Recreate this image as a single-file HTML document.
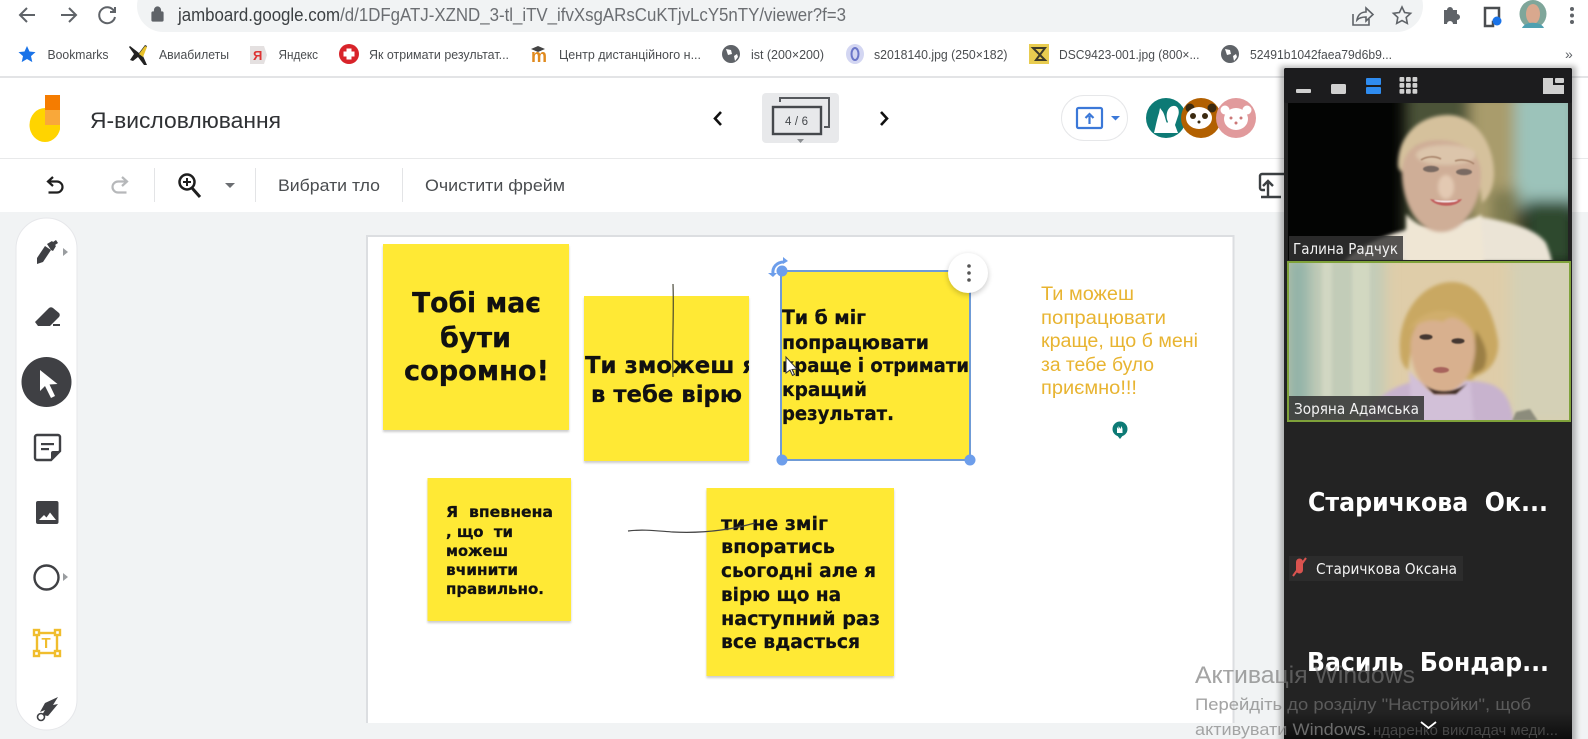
<!DOCTYPE html>
<html><head><meta charset="utf-8"><title>Jamboard</title>
<style>
html,body{margin:0;padding:0;background:#fff;width:1588px;height:739px;overflow:hidden}
svg{display:block}
text{font-family:"Liberation Sans","Noto Sans CJK SC",sans-serif}
.b{font-size:13px;fill:#4a4d50}
.s{font-family:"DejaVu Sans",sans-serif;font-weight:700;fill:#111;stroke:#111;stroke-width:.25}
.y{font-size:19px;fill:#e8b431}
.w{fill:#8a8a8a;opacity:.5}
.big{font-family:"DejaVu Sans",sans-serif;font-weight:700;font-size:26px;fill:#fff}
.lb{font-family:"DejaVu Sans",sans-serif;font-size:15px;fill:#f2f2f2}
</style></head><body>
<svg width="1588" height="739" viewBox="0 0 1588 739" xmlns="http://www.w3.org/2000/svg">
<defs>
<filter id="b05" x="-30%" y="-30%" width="160%" height="160%"><feGaussianBlur stdDeviation=".6"/></filter>
<filter id="b1" x="-30%" y="-30%" width="160%" height="160%"><feGaussianBlur stdDeviation="1"/></filter>
<filter id="b2" x="-30%" y="-30%" width="160%" height="160%"><feGaussianBlur stdDeviation="1.800"/></filter>
<filter id="b3" x="-40%" y="-40%" width="180%" height="180%"><feGaussianBlur stdDeviation="7"/></filter>
<filter id="sh" x="-30%" y="-30%" width="160%" height="160%"><feGaussianBlur stdDeviation="3"/></filter>
<clipPath id="c2"><rect x="584" y="296" width="165" height="165"/></clipPath>
<clipPath id="v1"><rect x="1288" y="103" width="280" height="157"/></clipPath>
<clipPath id="v2"><rect x="1287" y="261" width="283" height="160"/></clipPath>
<linearGradient id="bot" x1="0" y1="0" x2="0" y2="1"><stop offset="0" stop-color="#232323"/><stop offset="1" stop-color="#0d0d0d"/></linearGradient>
</defs>

<rect width="1588" height="739" fill="#fff"/>

<!-- browser top -->
<rect x="137" y="-20" width="1286" height="52" rx="26" fill="#f1f3f4"/>
<g fill="none" stroke="#5f6368" stroke-width="2">
<path d="M35 15H20M27 8l-7 7 7 7"/>
<path d="M61 15h15M69 8l7 7-7 7"/>
<path d="M114 11a8 8 0 1 0 1 6M115 7v5h-5"/>
</g>
<path d="M153 12h9a1 1 0 0 1 1 1v7a1 1 0 0 1-1 1h-9a1 1 0 0 1-1-1v-7a1 1 0 0 1 1-1zM154.500 12V10a3 3 0 0 1 6 0v2" fill="#5f6368" stroke="#5f6368" stroke-width="1.200"/>
<text x="178" y="21" font-size="18" fill="#3c4043" textLength="668" lengthAdjust="spacingAndGlyphs">jamboard.google.com<tspan fill="#6b6e72">/d/1DFgATJ-XZND_3-tl_iTV_ifvXsgARsCuKTjvLcY5nTY/viewer?f=3</tspan></text>
<g fill="none" stroke="#5f6368" stroke-width="1.600">
<path d="M1353 14v11h16v-6M1357 20c1-6 5-8 9-8V8l7 6.500-7 6.500v-4c-4 0-7 1-9 3z"/>
<path d="M1402 7l2.600 5.500 6 .8-4.400 4.100 1.100 6-5.300-2.900-5.300 2.900 1.100-6-4.400-4.100 6-.8z"/>
</g>
<path d="M1444 13h3a3 3 0 0 1 6 0h4v4a3 3 0 0 1 0 6v4h-4a3 3 0 0 0-6 0h-3z" fill="#5f6368" transform="translate(0,-3)"/>
<path d="M1485 8h14v14h-6v4h-8z" fill="none" stroke="#4a4d50" stroke-width="2.500"/>
<circle cx="1497" cy="21" r="4.500" fill="#1a73e8"/>
<ellipse cx="1533" cy="14" rx="13.500" ry="14" fill="#7fa69a"/>
<ellipse cx="1533" cy="14" rx="7" ry="10" fill="#d9a88e"/>
<path d="M1522 28c3-7 19-7 22 0z" fill="#4fa0b0"/>
<g fill="#5f6368"><circle cx="1572" cy="9" r="2"/><circle cx="1572" cy="15.500" r="2"/><circle cx="1572" cy="22" r="2"/></g>

<!-- bookmarks -->
<path d="M27 46l2.500 5.500 6 .6-4.500 4 1.300 6-5.300-3.100-5.300 3.100 1.300-6-4.500-4 6-.6z" fill="#1a73e8"/>
<text class="b" x="47.500" y="59" textLength="61" lengthAdjust="spacingAndGlyphs">Bookmarks</text>
<path d="M130 46l9 7 6-8 2 1-4 10 4 9-3 0-6-8-5 4-3-1 4-6-5-7z" fill="#222"/><path d="M139 54l6-8 2 1-4 10z" fill="#e9c22c"/>
<text class="b" x="159" y="59" textLength="70" lengthAdjust="spacingAndGlyphs">Авиабилеты</text>
<path d="M250 46h14l3 9-3 9h-14z" fill="#e4e0e0"/><text x="253" y="60" font-size="13" font-weight="700" fill="#d33">Я</text>
<text class="b" x="278.500" y="59" textLength="39.500" lengthAdjust="spacingAndGlyphs">Яндекс</text>
<circle cx="349" cy="54" r="10" fill="#d8232a"/><path d="M346.500 48.500h5v3h3v5h-3v3h-5v-3h-3v-5h3z" fill="#fff"/>
<text class="b" x="369" y="59" textLength="140" lengthAdjust="spacingAndGlyphs">Як отримати результат...</text>
<text x="531" y="62" font-size="18" font-weight="700" fill="#e08a1e">m</text><path d="M531 49l7-3 7 3-7 3z" fill="#444"/>
<text class="b" x="559" y="59" textLength="142" lengthAdjust="spacingAndGlyphs">Центр дистанційного н...</text>
<circle cx="731" cy="54" r="9" fill="#5f6368"/><path d="M726 49l5 1 1 4-4 1zM734 56l3-2 1 3-3 4z" fill="#fff"/>
<text class="b" x="751" y="59" textLength="73" lengthAdjust="spacingAndGlyphs">ist (200×200)</text>
<ellipse cx="855" cy="54" rx="9" ry="10" fill="#d3d6f2"/><ellipse cx="855" cy="54" rx="3.500" ry="6" fill="none" stroke="#6b76c8" stroke-width="2"/>
<text class="b" x="874" y="59" textLength="133.500" lengthAdjust="spacingAndGlyphs">s2018140.jpg (250×182)</text>
<rect x="1029" y="44" width="20" height="20" fill="#e8cc50"/><path d="M1033 48h12l-9 12h9l-12-12z" fill="none" stroke="#3d3a2a" stroke-width="2"/>
<text class="b" x="1059" y="59" textLength="140.500" lengthAdjust="spacingAndGlyphs">DSC9423-001.jpg (800×...</text>
<circle cx="1230" cy="54" r="9" fill="#5f6368"/><path d="M1225 49l5 1 1 4-4 1zM1233 56l3-2 1 3-3 4z" fill="#fff"/>
<text class="b" x="1250" y="59" textLength="142" lengthAdjust="spacingAndGlyphs">52491b1042faea79d6b9...</text>
<text x="1565" y="59" font-size="14" fill="#5f6368">»</text>
<rect x="0" y="76" width="1588" height="2" fill="#e3e4e6"/>

<!-- jam header -->
<ellipse cx="45" cy="125" rx="15.500" ry="17" fill="#ffd400"/>
<rect x="60" y="100" width="10" height="45" fill="#fff"/>
<rect x="45" y="95" width="15" height="15" fill="#f57c00"/>
<rect x="45" y="110" width="15" height="15" fill="#f9a83a"/>
<text x="90" y="128" font-size="22" fill="#2f3134" textLength="191" lengthAdjust="spacingAndGlyphs">Я-висловлювання</text>
<path d="M721 112l-6 6.500 6 6.500" fill="none" stroke="#111" stroke-width="2.600"/>
<rect x="762" y="93" width="77" height="50" rx="4" fill="#e8e9eb"/>
<path d="M780 102v-4h49v29h-5" fill="none" stroke="#55585c" stroke-width="2"/>
<rect x="773" y="107" width="48" height="27" fill="#e8e9eb" stroke="#45484c" stroke-width="2.400"/>
<text x="785" y="125" font-size="11.500" fill="#45484c" textLength="23" lengthAdjust="spacing">4 / 6</text>
<path d="M797 139h7l-3.500 4z" fill="#8a8d90"/>
<path d="M881 112l6 6.500-6 6.500" fill="none" stroke="#111" stroke-width="2.600"/>
<rect x="1061.500" y="95.500" width="66" height="45" rx="22.500" fill="#fff" stroke="#e6e7e9"/>
<rect x="1077" y="108" width="25" height="20" rx="1.500" fill="none" stroke="#3b78d8" stroke-width="2.200"/>
<path d="M1089.500 124v-8M1085.500 118l4-4 4 4" fill="none" stroke="#3b78d8" stroke-width="2.200"/>
<path d="M1111 116h9l-4.500 4.500z" fill="#3b78d8"/>
<circle cx="1166" cy="118" r="20" fill="#0d7a75"/>
<path d="M1154 133c2-8 3-14 5-20l1-5 3 4c3 6 3 13 5 10-3-6-1-15 5-16 5-1 7 5 5 10l-3 9 3 8z" fill="#fff"/>
<circle cx="1201" cy="118" r="20" fill="#b26000"/>
<circle cx="1190" cy="108" r="4.500" fill="#3b2a10"/><circle cx="1212" cy="108" r="4.500" fill="#3b2a10"/>
<ellipse cx="1199" cy="118" rx="13" ry="11" fill="#fff"/><circle cx="1193" cy="116" r="3" fill="#3b2a10"/><circle cx="1205" cy="116" r="3" fill="#3b2a10"/><circle cx="1199" cy="122" r="1.500" fill="#3b2a10"/>
<circle cx="1236" cy="118" r="20" fill="#e19a9c"/>
<circle cx="1225" cy="110" r="4.500" fill="#fff"/><circle cx="1247" cy="110" r="4.500" fill="#fff"/><ellipse cx="1236" cy="119" rx="12" ry="11" fill="#fff"/><circle cx="1231" cy="118" r="1.500" fill="#c77"/><circle cx="1241" cy="118" r="1.500" fill="#c77"/><circle cx="1236" cy="123" r="1.500" fill="#c77"/>
<rect x="0" y="158" width="1588" height="1" fill="#e8e9ea"/>

<!-- toolbar -->
<path d="M53 177l-5 4.500 5 4.500M48 181.500h9a5.500 5.500 0 0 1 0 11h-8.500" fill="none" stroke="#1f1f1f" stroke-width="2.200"/>
<path d="M122 177l5 4.500-5 4.500M127 181.500h-9a5.500 5.500 0 0 0 0 11h8.500" fill="none" stroke="#b6b8ba" stroke-width="2.200"/>
<rect x="154" y="168" width="1" height="34" fill="#e3e4e6"/>
<circle cx="187" cy="182" r="7.500" fill="none" stroke="#1f1f1f" stroke-width="2.500"/>
<path d="M192 188l8 9" stroke="#1f1f1f" stroke-width="3" fill="none"/>
<path d="M187 178v8M183 182h8" stroke="#1f1f1f" stroke-width="2" fill="none"/>
<path d="M225 183h10l-5 5z" fill="#6b6e72"/>
<rect x="255" y="168" width="1" height="34" fill="#e3e4e6"/>
<text x="278" y="191" font-size="17" fill="#4a4d50" textLength="102" lengthAdjust="spacingAndGlyphs">Вибрати тло</text>
<rect x="402" y="168" width="1" height="34" fill="#e3e4e6"/>
<text x="425" y="191" font-size="17" fill="#4a4d50" textLength="140" lengthAdjust="spacingAndGlyphs">Очистити фрейм</text>
<path d="M1265 190h-3a2 2 0 0 1-2-2v-12a2 2 0 0 1 2-2h24M1268 196v-14M1263 186l5-5 5 5M1261 197h20" fill="none" stroke="#3c4043" stroke-width="2.400"/>

<!-- canvas -->
<rect x="0" y="212" width="1588" height="527" fill="#f1f3f4"/>
<rect x="366" y="235" width="868" height="488" fill="#fff"/>
<path d="M367 723V236H1233.500V723" fill="none" stroke="#dcdee1" stroke-width="2"/>
<rect x="0" y="723" width="1588" height="16" fill="#f1f3f4"/>

<!-- left bar -->
<rect x="16" y="218" width="61" height="512" rx="30.500" fill="#fff" stroke="#e6e7ea"/>
<g fill="#3f4044">
<path d="M37 258l8-12 6 4-8 12-6 2z"/><path d="M47 244l5-3 1 1 3-2 2 3-3 2 1 1-3 5-2-1z"/>
<path d="M63 248l5 4-5 4z" fill="#9a9da0"/>
<path d="M35 322l14-14a3 3 0 0 1 4 0l6 5a3 3 0 0 1 0 4l-9 9H38z"/><rect x="53" y="324" width="7" height="2"/>
<circle cx="46.500" cy="382" r="25"/>
<path d="M37 435h21a2 2 0 0 1 2 2v14l-9 9H37a2 2 0 0 1-2-2V437a2 2 0 0 1 2-2z" fill="none" stroke="#3f4044" stroke-width="2.400"/>
<path d="M60 451h-7a2 2 0 0 0-2 2v7z"/>
<rect x="41" y="443" width="13" height="2.200"/><rect x="41" y="448" width="8" height="2.200"/>
<rect x="36" y="501" width="22.500" height="23" rx="2"/>
<circle cx="46.500" cy="577.500" r="12" fill="none" stroke="#3f4044" stroke-width="2.400"/>
<path d="M63 573l5 4-5 4z" fill="#9a9da0"/>
<path d="M45 703l13-6-5 8 5-1-10 12-6-1 3-5-5 2 5-9z"/><circle cx="41" cy="717" r="3.500" fill="#fff" stroke="#3f4044" stroke-width="1.600"/>
</g>
<path d="M39 520l5-5 2.500 2.500 3.500-5 6 7.500z" fill="#fff"/>
<path d="M40 370v21l5-5 6 12 4-2-5.500-11.500 8-.5z" fill="#fff"/>
<g fill="none" stroke="#f0bd2d" stroke-width="2.400">
<rect x="37" y="633" width="20" height="20"/><rect x="34" y="630" width="5" height="5" fill="#fff"/><rect x="55" y="630" width="5" height="5" fill="#fff"/><rect x="34" y="651" width="5" height="5" fill="#fff"/><rect x="55" y="651" width="5" height="5" fill="#fff"/>
</g>
<text x="41.500" y="648" font-size="15" font-weight="700" fill="#f0bd2d">T</text>

<!-- sticky 1 -->
<rect x="383" y="246" width="186" height="186" fill="#9a9a9a" opacity=".5" filter="url(#b1)"/>
<rect x="383" y="244" width="186" height="186" fill="#ffe935"/>
<text class="s" font-size="28" x="412" y="312" textLength="129" lengthAdjust="spacingAndGlyphs">Тобі має</text>
<text class="s" font-size="28" x="440" y="347" textLength="71" lengthAdjust="spacingAndGlyphs">бути</text>
<text class="s" font-size="28" x="404" y="380" textLength="145" lengthAdjust="spacingAndGlyphs">соромно!</text>
<!-- sticky 2 -->
<rect x="584" y="298" width="165" height="165" fill="#9a9a9a" opacity=".5" filter="url(#b1)"/>
<rect x="584" y="296" width="165" height="165" fill="#ffe935"/>
<g clip-path="url(#c2)">
<text class="s" font-size="23" x="585" y="373" textLength="172" lengthAdjust="spacingAndGlyphs">Ти зможеш я</text>
<text class="s" font-size="23" x="591" y="402" textLength="151" lengthAdjust="spacingAndGlyphs">в тебе вірю</text>
</g>
<path d="M673 284c1 30-1 60 0 93" stroke="#3a3a2a" stroke-width="1.100" fill="none"/>
<!-- sticky 3 -->
<rect x="781" y="271" width="189" height="189" fill="#ffe935" stroke="#6f9bd6" stroke-width="2"/>
<text class="s" font-size="19.500" x="782" y="324" textLength="84" lengthAdjust="spacingAndGlyphs">Ти б міг</text>
<text class="s" font-size="19.500" x="782" y="349" textLength="147" lengthAdjust="spacingAndGlyphs">попрацювати</text>
<text class="s" font-size="19.500" x="782" y="372" textLength="187" lengthAdjust="spacingAndGlyphs">краще і отримати</text>
<text class="s" font-size="19.500" x="782" y="396" textLength="85" lengthAdjust="spacingAndGlyphs">кращий</text>
<text class="s" font-size="19.500" x="782" y="420" textLength="112" lengthAdjust="spacingAndGlyphs">результат.</text>
<path d="M786 357v16l4-3 2.500 5.500 2-1-2.500-5 5-.5z" fill="#fff" stroke="#333" stroke-width="1"/>
<circle cx="782" cy="271" r="5.500" fill="#6d9eeb"/><circle cx="782" cy="460" r="5.500" fill="#6d9eeb"/><circle cx="970" cy="460" r="5.500" fill="#6d9eeb"/>
<path d="M773 274c-1-7 4-12 11-12" fill="none" stroke="#6d9eeb" stroke-width="3"/>
<path d="M768 273l5 4 4-4zM783 257l5 4-5 3z" fill="#6d9eeb"/>
<circle cx="968" cy="275" r="20" fill="#000" opacity=".22" filter="url(#sh)"/>
<circle cx="968" cy="273" r="20" fill="#fff"/>
<g fill="#555"><circle cx="969" cy="266" r="1.800"/><circle cx="969" cy="273" r="1.800"/><circle cx="969" cy="280" r="1.800"/></g>
<!-- sticky 4 -->
<rect x="427.500" y="480" width="143.500" height="143" fill="#9a9a9a" opacity=".5" filter="url(#b1)"/>
<rect x="427.500" y="478" width="143.500" height="143" fill="#ffe935"/>
<text class="s" font-size="15" x="446" y="517" textLength="107" lengthAdjust="spacingAndGlyphs" xml:space="preserve">Я  впевнена</text>
<text class="s" font-size="15" x="446" y="537" textLength="67" lengthAdjust="spacingAndGlyphs" xml:space="preserve">, що  ти</text>
<text class="s" font-size="15" x="446" y="556" textLength="62" lengthAdjust="spacingAndGlyphs">можеш</text>
<text class="s" font-size="15" x="446" y="575" textLength="72" lengthAdjust="spacingAndGlyphs">вчинити</text>
<text class="s" font-size="15" x="446" y="594" textLength="98" lengthAdjust="spacingAndGlyphs">правильно.</text>
<!-- sticky 5 -->
<rect x="706.500" y="490" width="187.500" height="188" fill="#9a9a9a" opacity=".5" filter="url(#b1)"/>
<rect x="706.500" y="488" width="187.500" height="188" fill="#ffe935"/>
<text class="s" font-size="19" x="721" y="530" textLength="107" lengthAdjust="spacingAndGlyphs">ти не зміг</text>
<text class="s" font-size="19" x="721" y="553" textLength="114" lengthAdjust="spacingAndGlyphs">впоратись</text>
<text class="s" font-size="19" x="721" y="577" textLength="155" lengthAdjust="spacingAndGlyphs">сьогодні але я</text>
<text class="s" font-size="19" x="721" y="601" textLength="120" lengthAdjust="spacingAndGlyphs">вірю що на</text>
<text class="s" font-size="19" x="721" y="625" textLength="159" lengthAdjust="spacingAndGlyphs">наступний раз</text>
<text class="s" font-size="19" x="721" y="648" textLength="139" lengthAdjust="spacingAndGlyphs">все вдасться</text>
<path d="M628 531c15-2 30 0 45 1 20 1 50 0 82-9" fill="none" stroke="#444" stroke-width="1.200"/>

<!-- yellow text -->
<text class="y" x="1041" y="300" textLength="93" lengthAdjust="spacingAndGlyphs">Ти можеш</text>
<text class="y" x="1041" y="324" textLength="125" lengthAdjust="spacingAndGlyphs">попрацювати</text>
<text class="y" x="1041" y="347" textLength="157" lengthAdjust="spacingAndGlyphs">краще, що б мені</text>
<text class="y" x="1041" y="371" textLength="113" lengthAdjust="spacingAndGlyphs">за тебе було</text>
<text class="y" x="1041" y="394" textLength="96" lengthAdjust="spacingAndGlyphs">приємно!!!</text>
<circle cx="1120" cy="429" r="7.500" fill="#0d7a75"/><path d="M1116 434l4 5 4-5z" fill="#0d7a75"/><path d="M1117 433v-6l1.500 2v-3l2 3 1-3 1 3v4z" fill="#fff"/>

<!-- watermark under panel -->
<text class="w" x="1195" y="683" font-size="24" textLength="220" lengthAdjust="spacingAndGlyphs">Активація Windows</text>
<text class="w" x="1195" y="710" font-size="17" textLength="336" lengthAdjust="spacingAndGlyphs">Перейдіть до розділу "Настройки", щоб</text>

<!-- zoom panel -->
<rect x="1280" y="66" width="296" height="680" fill="#000" opacity=".28" filter="url(#sh)"/>
<rect x="1284" y="68" width="288" height="671" rx="2" fill="#232323"/>
<rect x="1284" y="68" width="288" height="35" rx="2" fill="#1c1c1e"/>
<rect x="1296" y="89" width="15" height="4" rx="1" fill="#d0d0d0"/>
<rect x="1331" y="84" width="15" height="10" rx="1.500" fill="#d0d0d0"/>
<rect x="1366" y="78" width="15" height="7" rx="1" fill="#2f8cf0"/><rect x="1366" y="87" width="15" height="7" rx="1" fill="#2f8cf0"/>
<g fill="#d0d0d0">
<rect x="1399.500" y="77" width="4.800" height="4.800" rx="1"/><rect x="1406" y="77" width="4.800" height="4.800" rx="1"/><rect x="1412.500" y="77" width="4.800" height="4.800" rx="1"/>
<rect x="1399.500" y="83" width="4.800" height="4.800" rx="1"/><rect x="1406" y="83" width="4.800" height="4.800" rx="1"/><rect x="1412.500" y="83" width="4.800" height="4.800" rx="1"/>
<rect x="1399.500" y="89" width="4.800" height="4.800" rx="1"/><rect x="1406" y="89" width="4.800" height="4.800" rx="1"/><rect x="1412.500" y="89" width="4.800" height="4.800" rx="1"/>
<path d="M1543 78h10v7h11v9h-21z"/><rect x="1555" y="78" width="9" height="5" rx="1"/>
</g>

<!-- video 1 -->
<g clip-path="url(#v1)">
<rect x="1288" y="103" width="280" height="157" fill="#030403"/>
<g filter="url(#b3)">
<rect x="1405" y="90" width="75" height="150" fill="#4c5238"/>
<rect x="1470" y="90" width="45" height="140" fill="#a99c6c"/>
<rect x="1515" y="90" width="65" height="120" fill="#9cc3ba"/>
<rect x="1525" y="200" width="50" height="65" fill="#2f4a2e"/>
<rect x="1490" y="190" width="30" height="50" fill="#7d7a50"/>
</g>
<path d="M1344 262c10-12 32-24 62-32l75-13c30 5 55 12 65 26 2 5 4 10 6 19z" fill="#ebe4d6" filter="url(#b2)"/>
<path d="M1406 214c20 22 55 22 75 0l3 48h-78z" fill="#efe6d4" filter="url(#b2)"/>
<g filter="url(#b2)">
<path d="M1398 165c0-30 22-50 50-50 28 0 46 30 46 58 0 14-5 24-12 30l-6-50-60-8-8 30c-6-2-10-5-10-10z" fill="#d5c19c"/>
<path d="M1402 172c0-18 12-32 36-32 26 0 43 14 43 34 0 32-18 58-40 58-24 0-39-30-39-60z" fill="#cfae97"/>
<ellipse cx="1446" cy="155" rx="30" ry="10" fill="#dcc5ab"/>
<ellipse cx="1446" cy="187" rx="8" ry="12" fill="#e3c9b2"/>
</g>
<g filter="url(#b05)">
<ellipse cx="1431" cy="169" rx="8" ry="3.200" fill="#7a6a62"/><ellipse cx="1464" cy="172" rx="8" ry="3.200" fill="#7a6a62"/>
<path d="M1421 160c6-4 14-4 20-1M1455 161c6-2 14-1 19 3" stroke="#a8846a" stroke-width="1.600" fill="none"/>
<path d="M1430 199c10 2 22 2 32 0-5 9-26 9-32 0z" fill="#c25f5d"/><path d="M1434 200c8 1 16 1 24 0-2 3-22 3-24 0z" fill="#fff"/>
</g>
<rect x="1289" y="236" width="114" height="24" fill="#333" opacity=".82"/>
<text class="lb" x="1293" y="254" textLength="105" lengthAdjust="spacingAndGlyphs">Галина Радчук</text>
</g>

<!-- video 2 -->
<g clip-path="url(#v2)">
<rect x="1287" y="261" width="283" height="160" fill="#dfcda9"/>
<g filter="url(#b3)">
<rect x="1510" y="255" width="70" height="170" fill="#d4d0b6"/>
<rect x="1285" y="255" width="100" height="170" fill="#c2ccb8"/>
<rect x="1285" y="255" width="25" height="170" fill="#92b3a8"/>
</g>
<g filter="url(#b2)" opacity=".6"><rect x="1322" y="262" width="10" height="135" fill="#dcdfca"/><rect x="1352" y="262" width="18" height="135" fill="#dde0c8"/></g>
<path d="M1360 423c8-18 26-34 48-40l66-2c24 2 36 10 40 42z" fill="#c8b3ce" filter="url(#b2)"/>
<path d="M1409 370c12 20 46 20 61 8l4 45h-62z" fill="#d2c0d8" filter="url(#b2)"/>
<g filter="url(#b2)">
<path d="M1400 350c-2-36 22-68 52-68 30 0 42 34 46 58 2 18-8 32-22 36l-4 4h-8l-2-40-50 4-4 26c-6-4-8-12-8-20z" fill="#c9a862"/>
<path d="M1476 330c8 12 14 24 8 38-4 4-10 6-12 6z" fill="#9b7f45"/>
<path d="M1411 340c4-18 14-26 32-26 18 0 30 10 32 30 2 24-14 50-33 50-20 0-34-28-31-54z" fill="#d8b08e"/>
<path d="M1409 330c8-20 50-32 64 2-12-14-22-18-30-10-12-4-24 0-34 8z" fill="#d0ae6c"/>
</g>
<path d="M1424 384c10 10 30 10 44-1l-12 11h-22z" fill="#3d2c22" filter="url(#b1)"/>
<g filter="url(#b05)">
<ellipse cx="1426" cy="337" rx="6.500" ry="2.800" fill="#453830"/><ellipse cx="1458" cy="341" rx="6.500" ry="2.800" fill="#453830"/>
<ellipse cx="1441" cy="370" rx="8" ry="3" fill="#a8645c"/>
</g>
<path d="M1516 412l14-3 8 12h-26z" fill="#8c8c7c" filter="url(#b1)"/>
<rect x="1289" y="396" width="135" height="25" fill="#333" opacity=".85"/>
<text class="lb" x="1294" y="414" textLength="125" lengthAdjust="spacingAndGlyphs">Зоряна Адамська</text>
</g>
<rect x="1288" y="262" width="282" height="159" fill="none" stroke="#7fa23a" stroke-width="2"/>

<text class="big" x="1308" y="511" textLength="240" lengthAdjust="spacingAndGlyphs" xml:space="preserve">Старичкова  Ок...</text>
<rect x="1289" y="556" width="174" height="25" fill="#2c2c2c"/>
<path d="M1296 562a3.500 3.500 0 0 1 7 0v8a3.500 3.500 0 0 1-7 0z" fill="#d9534f"/>
<path d="M1293 576l13-18" stroke="#d9534f" stroke-width="2" fill="none"/>
<text class="lb" x="1316" y="574" textLength="141" lengthAdjust="spacingAndGlyphs">Старичкова Оксана</text>
<text class="big" x="1307" y="671" textLength="242" lengthAdjust="spacingAndGlyphs" xml:space="preserve">Василь  Бондар...</text>

<!-- watermark over panel -->
<text x="1195" y="683" font-size="24" fill="#8a8a8a" opacity=".55" textLength="220" lengthAdjust="spacingAndGlyphs">Активація Windows</text>
<rect x="1284" y="712" width="288" height="27" fill="url(#bot)"/>
<text x="1195" y="710" font-size="17" fill="#8a8a8a" opacity=".55" textLength="336" lengthAdjust="spacingAndGlyphs">Перейдіть до розділу "Настройки", щоб</text>
<text x="1373" y="735" font-size="15" fill="#474747" textLength="185" lengthAdjust="spacingAndGlyphs">ндаренко викладач меди...</text>
<text x="1195" y="735" font-size="17" fill="#8a8a8a" opacity=".75" textLength="176" lengthAdjust="spacingAndGlyphs">активувати Windows.</text>
<path d="M1421 722l7.500 6 7.500-6" fill="none" stroke="#fff" stroke-width="1.800"/>
</svg>
</body></html>
